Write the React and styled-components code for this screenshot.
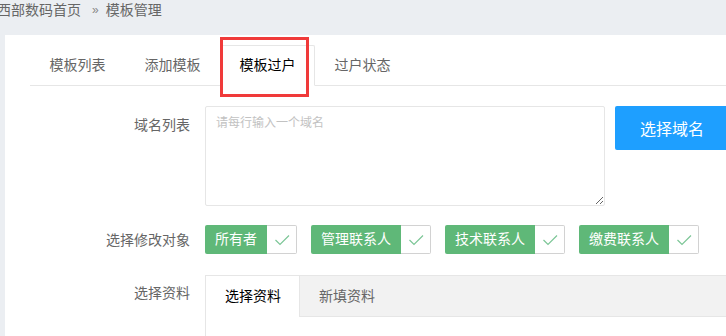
import React, { useState } from "react";
import styled, { createGlobalStyle } from "styled-components";

const GlobalStyle = createGlobalStyle`
  html, body {
    margin: 0;
    padding: 0;
    background: #ebeef2;
    overflow: hidden;
  }
  body {
    font-family: "Helvetica Neue", Arial, "Noto Sans CJK SC", sans-serif;
    font-size: 14px;
    color: #666;
  }
`;

const Page = styled.div`
  width: 900px;
  height: 336px;
`;

const Breadcrumb = styled.div`
  height: 35px;
  display: flex;
  align-items: flex-start;
  margin-left: -3px;
  line-height: 21px;
  color: #666;
  font-size: 14px;

  .sep {
    margin: 0 7px 0 11px;
    font-size: 12px;
    color: #888;
  }
`;

const Panel = styled.div`
  margin-left: 5px;
  background: #fff;
  padding: 10px 0 0 25px;
  height: 301px;
  box-sizing: border-box;
`;

const TabBar = styled.ul`
  display: flex;
  list-style: none;
  margin: 0;
  padding: 0;
  height: 40px;
  border-bottom: 1px solid #e6e6e6;
`;

const TabItem = styled.li`
  position: relative;
  height: ${p => (p.$active ? 39 : 40)}px;
  line-height: ${p => (p.$active ? 39 : 40)}px;
  padding: 0 ${p => (p.$active ? 18.5 : 19.5)}px;
  color: ${p => (p.$active ? "#000" : "#666")};
  cursor: pointer;
  border: ${p => (p.$active ? "1px solid #e6e6e6" : "none")};
  border-bottom: ${p => (p.$active ? "1px solid #fff" : "none")};
  border-radius: 2px 2px 0 0;
  background: #fff;
`;

const Highlight = styled.span`
  position: absolute;
  left: -1px;
  top: -9px;
  width: 89px;
  height: 60px;
  box-sizing: border-box;
  border: 3px solid #f03a3a;
  pointer-events: none;
`;

const Form = styled.div`
  padding-top: 20px;
`;

const FormItem = styled.div`
  display: flex;
  align-items: flex-start;
  margin-bottom: ${p => p.$gap || 0}px;
`;

const Label = styled.label`
  width: 160px;
  padding: ${p => p.$pt || 9}px 15px 0 0;
  text-align: right;
  line-height: 20px;
  color: #666;
  flex-shrink: 0;
`;

const TextArea = styled.textarea`
  width: 400px;
  height: 100px;
  box-sizing: border-box;
  border: 1px solid #e6e6e6;
  border-radius: 2px;
  padding: 6px 10px;
  line-height: 20px;
  font-family: inherit;
  font-size: 12px;
  color: #333;
  outline: none;
  resize: vertical;

  &::placeholder {
    color: #c2c2c2;
  }
`;

const BlueButton = styled.button`
  margin-left: 10px;
  height: 44px;
  padding: 0 25px;
  border: none;
  border-radius: 2px;
  background: #1e9fff;
  color: #fff;
  font-family: inherit;
  font-size: 16px;
  white-space: nowrap;
  flex-shrink: 0;
`;

const CheckGroup = styled.div`
  display: flex;
  gap: 14px;
`;

const Check = styled.div`
  display: flex;
  height: 29px;
  cursor: pointer;
`;

const CheckText = styled.span`
  background: #5fb878;
  color: #fff;
  padding: 0 10px;
  line-height: 29px;
  border-radius: 2px 0 0 2px;
  white-space: nowrap;
`;

const CheckMark = styled.i`
  width: 30px;
  height: 29px;
  box-sizing: border-box;
  border: 1px solid #d2d2d2;
  border-left: none;
  border-radius: 0 2px 2px 0;
  display: flex;
  align-items: center;
  justify-content: center;
`;

const CardTabs = styled.div`
  flex: 1;
  border: 1px solid #e6e6e6;
  border-right: none;
  height: 70px;
`;

const CardHeader = styled.ul`
  display: flex;
  list-style: none;
  margin: 0;
  padding: 0;
  height: 40px;
  background: #f2f2f2;
  border-bottom: 1px solid #e6e6e6;
`;

const CardTab = styled.li`
  height: ${p => (p.$active ? 41 : 40)}px;
  line-height: 40px;
  padding: 0 ${p => (p.$active ? 18 : 19)}px 0 19px;
  color: ${p => (p.$active ? "#000" : "#666")};
  background: ${p => (p.$active ? "#fff" : "transparent")};
  border-right: ${p => (p.$active ? "1px solid #e6e6e6" : "none")};
  cursor: pointer;
`;

const CheckIcon = () => (
  <svg width="16" height="12" viewBox="0 0 16 12">
    <polyline
      points="1.5,6 6,10.5 15,1.5"
      fill="none"
      stroke="#7cc697"
      strokeWidth="1.2"
    />
  </svg>
);

const tabs = ["模板列表", "添加模板", "模板过户", "过户状态"];
const targets = ["所有者", "管理联系人", "技术联系人", "缴费联系人"];

export default function App() {
  const [active, setActive] = useState(2);
  const [cardActive, setCardActive] = useState(0);

  return (
    <Page>
      <GlobalStyle />
      <Breadcrumb>
        <span>西部数码首页</span>
        <span className="sep">»</span>
        <span>模板管理</span>
      </Breadcrumb>
      <Panel>
        <TabBar>
          {tabs.map((t, i) => (
            <TabItem key={t} $active={i === active} onClick={() => setActive(i)}>
              {t}
              {i === 2 && <Highlight />}
            </TabItem>
          ))}
        </TabBar>
        <Form>
          <FormItem $gap={19}>
            <Label>域名列表</Label>
            <TextArea placeholder="请每行输入一个域名" />
            <BlueButton>选择域名</BlueButton>
          </FormItem>
          <FormItem $gap={21}>
            <Label $pt={5}>选择修改对象</Label>
            <CheckGroup>
              {targets.map(t => (
                <Check key={t}>
                  <CheckText>{t}</CheckText>
                  <CheckMark>
                    <CheckIcon />
                  </CheckMark>
                </Check>
              ))}
            </CheckGroup>
          </FormItem>
          <FormItem>
            <Label $pt={8}>选择资料</Label>
            <CardTabs>
              <CardHeader>
                {["选择资料", "新填资料"].map((t, i) => (
                  <CardTab
                    key={t}
                    $active={i === cardActive}
                    onClick={() => setCardActive(i)}
                  >
                    {t}
                  </CardTab>
                ))}
              </CardHeader>
            </CardTabs>
          </FormItem>
        </Form>
      </Panel>
    </Page>
  );
}
